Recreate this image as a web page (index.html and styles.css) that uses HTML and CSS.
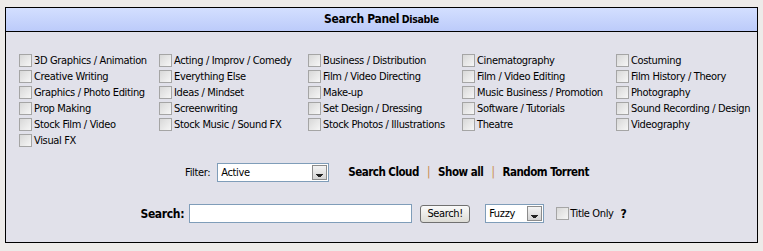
FILE: index.html
```html
<!DOCTYPE html>
<html>
<head>
  <meta charset="UTF-8">
  <link rel="stylesheet" href="styles.css">
</head>
<body>
  <div class="panel">
    <div class="panel-head">
      <span class="title">Search Panel</span> <a class="toggle" href="#">Disable</a>
    </div>
    <div class="panel-body">
      <div class="cats">
        <label class="cat"><input type="checkbox"> 3D Graphics / Animation</label>
        <label class="cat"><input type="checkbox"> Acting / Improv / Comedy</label>
        <label class="cat"><input type="checkbox"> Business / Distribution</label>
        <label class="cat"><input type="checkbox"> Cinematography</label>
        <label class="cat"><input type="checkbox"> Costuming</label>
        <label class="cat"><input type="checkbox"> Creative Writing</label>
        <label class="cat"><input type="checkbox"> Everything Else</label>
        <label class="cat"><input type="checkbox"> Film / Video Directing</label>
        <label class="cat"><input type="checkbox"> Film / Video Editing</label>
        <label class="cat"><input type="checkbox"> Film History / Theory</label>
        <label class="cat"><input type="checkbox"> Graphics / Photo Editing</label>
        <label class="cat"><input type="checkbox"> Ideas / Mindset</label>
        <label class="cat"><input type="checkbox"> Make-up</label>
        <label class="cat"><input type="checkbox"> Music Business / Promotion</label>
        <label class="cat"><input type="checkbox"> Photography</label>
        <label class="cat"><input type="checkbox"> Prop Making</label>
        <label class="cat"><input type="checkbox"> Screenwriting</label>
        <label class="cat"><input type="checkbox"> Set Design / Dressing</label>
        <label class="cat"><input type="checkbox"> Software / Tutorials</label>
        <label class="cat"><input type="checkbox"> Sound Recording / Design</label>
        <label class="cat"><input type="checkbox"> Stock Film / Video</label>
        <label class="cat"><input type="checkbox"> Stock Music / Sound FX</label>
        <label class="cat"><input type="checkbox"> Stock Photos / Illustrations</label>
        <label class="cat"><input type="checkbox"> Theatre</label>
        <label class="cat"><input type="checkbox"> Videography</label>
        <label class="cat"><input type="checkbox"> Visual FX</label>
      </div>

      <div class="filter-row">
        <label class="filter-label" for="filter">Filter:</label>
        <span class="dropdown wide">
          <select id="filter">
            <option>Active</option>
            <option>All</option>
          </select>
        </span>
        <span class="links">
          <a href="#">Search Cloud</a>
          <span class="sep">|</span>
          <a href="#">Show all</a>
          <span class="sep">|</span>
          <a href="#">Random Torrent</a>
        </span>
      </div>

      <div class="search-row">
        <label class="search-label" for="q">Search:</label>
        <input type="text" id="q" class="search-input">
        <button class="btn">Search!</button>
        <span class="dropdown narrow">
          <select>
            <option>Fuzzy</option>
            <option>Exact</option>
          </select>
        </span>
        <label class="title-only"><input type="checkbox">Title Only</label>
        <a class="help" href="#">?</a>
      </div>
    </div>
  </div>
</body>
</html>
```

FILE: styles.css
```css
body {
  margin: 0;
  padding: 7px 5px 0;
  background: #edebe9;
  font-family: Tahoma, "DejaVu Sans Condensed", "Liberation Sans", sans-serif;
  font-size: 11px;
  letter-spacing: -0.35px;
  color: #000;
}

a {
  color: #000;
  text-decoration: none;
}

.panel {
  border: 1px solid #000;
  background: #e1e1ea;
}

.panel-head {
  height: 23px;
  line-height: 23px;
  text-align: center;
  border-bottom: 1px solid #000;
  background: linear-gradient(#d3dfff, #bccbfa);
}

.panel-head .title {
  font-weight: bold;
  font-size: 12px;
}

.panel-head .toggle {
  font-weight: bold;
  font-size: 10.5px;
}

.panel-body {
  padding: 20px 0 19px 13px;
}

.cats {
  display: grid;
  grid-template-columns: 140px 149px 154px 154px auto;
  grid-auto-rows: 16px;
}

.cat {
  display: flex;
  align-items: center;
  gap: 2px;
  white-space: nowrap;
}

input[type="checkbox"] {
  appearance: none;
  margin: 0;
  width: 13px;
  height: 13px;
  border: 1px solid #a5a5a5;
  background: linear-gradient(135deg, #d8d8d8, #f6f6f6);
  flex: none;
}

.filter-row {
  display: flex;
  align-items: center;
  justify-content: center;
  height: 20px;
  margin: 14px 0 0 -2px;
}

.filter-label {
  margin-right: 7px;
}

.dropdown {
  position: relative;
  display: inline-block;
  height: 19px;
  border: 1px solid #7f9db9;
  background: #fff;
  box-sizing: border-box;
}

.dropdown select {
  appearance: none;
  border: 0;
  background: transparent;
  font: inherit;
  letter-spacing: inherit;
  height: 17px;
  padding: 0 0 0 3px;
  width: 100%;
  outline: none;
}

.dropdown::after {
  content: "";
  position: absolute;
  top: 1px;
  right: 1px;
  width: 15px;
  height: 15px;
  box-sizing: border-box;
  border: 1px solid #8c8c8c;
  background:
    linear-gradient(#222, #222) center 8px / 7px 1px no-repeat,
    linear-gradient(#222, #222) center 9px / 5px 1px no-repeat,
    linear-gradient(#222, #222) center 10px / 3px 1px no-repeat,
    linear-gradient(#f4f4f4, #d4d4d4);
  pointer-events: none;
}

.dropdown.wide {
  width: 112px;
}

.dropdown.narrow {
  width: 59px;
  margin-right: 12px;
}

.links {
  margin-left: 19px;
  font-weight: bold;
  font-size: 11.5px;
  letter-spacing: -0.5px;
}

.links .sep {
  color: #c8894a;
  margin: 0 5px;
  font-weight: normal;
}

.search-row {
  display: flex;
  align-items: center;
  justify-content: center;
  height: 19px;
  margin: 22px 0 0 -9px;
}

.search-label {
  font-weight: bold;
  font-size: 12px;
  margin-right: 5px;
}

.search-input {
  width: 223px;
  height: 19px;
  box-sizing: border-box;
  border: 1px solid #7f9db9;
  margin: 0 8px 0 0;
  padding: 1px 3px;
  font: inherit;
}

.btn {
  width: 50px;
  height: 18px;
  padding: 0;
  margin-right: 15px;
  border: 1px solid #707070;
  border-radius: 3px;
  background: linear-gradient(#fafafa, #dddcd6);
  font: inherit;
  letter-spacing: inherit;
  color: #000;
}

.title-only {
  display: flex;
  align-items: center;
  gap: 1px;
  margin-right: 7px;
}

.help {
  font-weight: bold;
  font-size: 12px;
}
```
